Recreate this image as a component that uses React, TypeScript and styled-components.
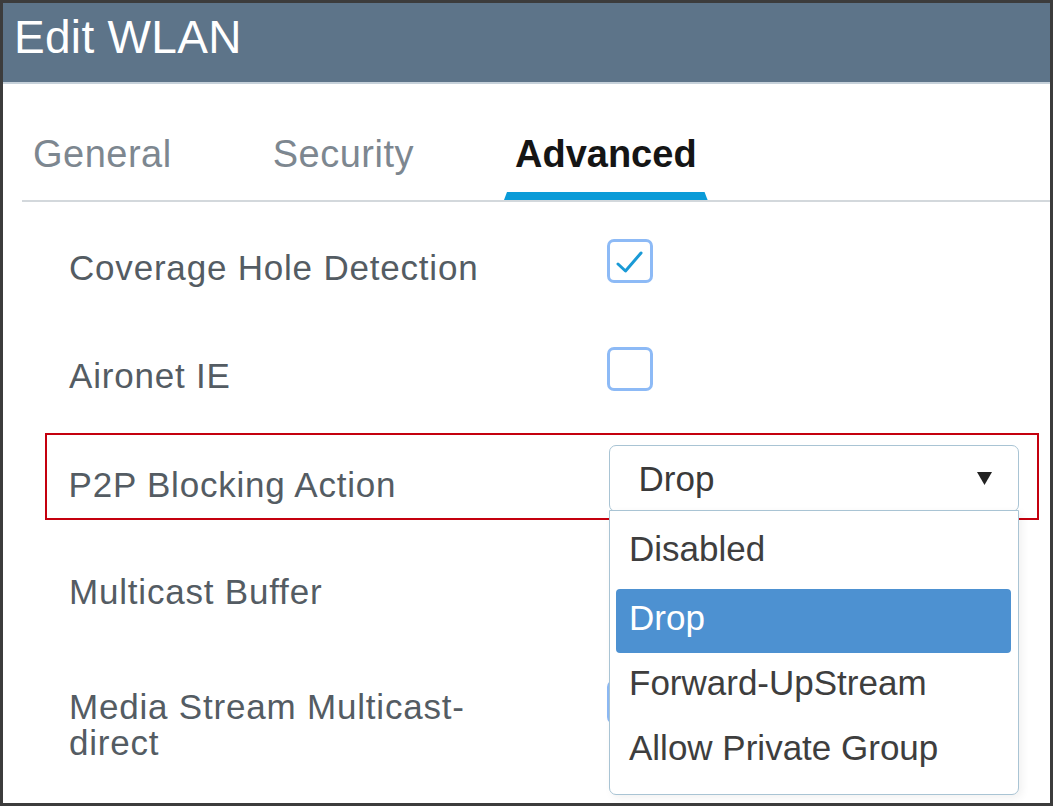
import React from "react";
import styled, { createGlobalStyle, css } from "styled-components";

const Global = createGlobalStyle`
  html, body { margin: 0; padding: 0; background: #ffffff; }
  body { font-family: "Liberation Sans", Arial, sans-serif; }
  * { box-sizing: border-box; }
`;

const Frame = styled.div`
  width: 1053px;
  height: 806px;
  border: 3px solid #3c3c3c;
  overflow: hidden;
  background: #ffffff;
  display: flex;
  flex-direction: column;
`;

const Header = styled.header`
  height: 81px;
  flex: 0 0 81px;
  background: #5d7489;
  border-bottom: 2px solid #c6d1da;
  padding: 11px 0 0 11px;
`;

const Title = styled.h1`
  margin: 0;
  font-size: 46px;
  line-height: 46px;
  font-weight: 400;
  color: #ffffff;
  letter-spacing: 0.3px;
`;

const TabBar = styled.nav`
  margin-left: 19px;
  padding-top: 51px;
  display: flex;
  gap: 79px;
  border-bottom: 2px solid #d3d8dc;
`;

const Tab = styled.div<{ $active?: boolean }>`
  position: relative;
  padding: 0 11px 27px;
  font-size: 38px;
  line-height: 38px;
  color: #7d8790;
  letter-spacing: 0.5px;
  ${(p) =>
    p.$active &&
    css`
      color: #151515;
      font-weight: 700;
      letter-spacing: 0;
      &::after {
        content: "";
        position: absolute;
        left: 0;
        right: 0;
        bottom: 0;
        height: 8px;
        background: #0a9bd8;
        clip-path: polygon(1.5% 0, 98.5% 0, 100% 100%, 0 100%);
      }
    `}
`;

const Form = styled.div`
  padding: 5px 11px 0 42px;
  display: flex;
  flex-direction: column;
`;

const Row = styled.div<{ $highlight?: boolean; $top?: boolean }>`
  display: flex;
  align-items: ${(p) => (p.$top ? "flex-start" : "center")};
  height: 108px;
  border: 2px solid transparent;
  padding-left: 22px;
  ${(p) =>
    p.$highlight &&
    css`
      height: 87px;
      margin: 10px 0 11px;
      padding-top: 4px;
      border: 2.5px solid #c4000e;
      padding-left: 21.5px;
      position: relative;
      z-index: 2;
    `}
`;

const Label = styled.div<{ $pad?: number }>`
  flex: 0 0 538px;
  padding-top: ${(p) => p.$pad ?? 13}px;
  font-size: 35px;
  line-height: 36px;
  color: #545c63;
  letter-spacing: 0.8px;
`;

const Box = styled.div<{ $offset?: number }>`
  width: 46px;
  height: 44px;
  margin-top: ${(p) => p.$offset ?? 0}px;
  border: 3px solid #8dbaf6;
  border-radius: 7px;
  background: #ffffff;
  display: flex;
  align-items: center;
  justify-content: center;
`;

const SelectWrap = styled.div`
  position: relative;
  margin-left: 2px;
  width: 410px;
`;

const Select = styled.div`
  height: 67px;
  border: 1.5px solid #a9c4d4;
  border-radius: 7px;
  background: #ffffff;
  display: flex;
  align-items: center;
  justify-content: space-between;
  padding: 0 26px 0 29px;
  font-size: 35px;
  color: #3a3a3a;
`;

const Menu = styled.ul`
  position: absolute;
  top: calc(100% - 2px);
  left: 0;
  width: 100%;
  margin: 0;
  list-style: none;
  height: 285px;
  padding: 8.5px 6.5px 10.5px;
  border: 1.5px solid #a9c4d4;
  border-radius: 0 0 7px 7px;
  background: #ffffff;
  box-shadow: 3px 3px 8px rgba(0, 0, 0, 0.06);
  display: flex;
  flex-direction: column;
  gap: 1px;
`;

const Item = styled.li<{ $selected?: boolean }>`
  height: 64px;
  flex: 0 0 64px;
  line-height: 58px;
  padding: 0 0 6px 13px;
  font-size: 35px;
  border-radius: 4px;
  color: ${(p) => (p.$selected ? "#ffffff" : "#3e3e3e")};
  background: ${(p) => (p.$selected ? "#4d91d1" : "transparent")};
  &:first-child {
    margin-bottom: 4px;
  }
`;

const Check = () => (
  <svg width="40" height="38" viewBox="0 0 40 38" style={{ display: "block" }}>
    <polyline
      points="8,22 15.5,29 31,11"
      fill="none"
      stroke="#1a9ad6"
      strokeWidth="3"
      strokeLinecap="round"
      strokeLinejoin="round"
    />
  </svg>
);

const Caret = () => (
  <svg width="15" height="13" viewBox="0 0 15 13">
    <polygon points="0,0 15,0 7.5,13" fill="#222222" />
  </svg>
);

export default function App() {
  return (
    <>
      <Global />
      <Frame>
        <Header>
          <Title>Edit WLAN</Title>
        </Header>
        <TabBar>
          <Tab>General</Tab>
          <Tab>Security</Tab>
          <Tab $active>Advanced</Tab>
        </TabBar>
        <Form>
          <Row>
            <Label>Coverage Hole Detection</Label>
            <Box>
              <Check />
            </Box>
          </Row>
          <Row>
            <Label>Aironet IE</Label>
            <Box />
          </Row>
          <Row $highlight>
            <Label>P2P Blocking Action</Label>
            <SelectWrap>
              <Select>
                <span>Drop</span>
                <Caret />
              </Select>
              <Menu>
                <Item>Disabled</Item>
                <Item $selected>Drop</Item>
                <Item>Forward-UpStream</Item>
                <Item>Allow Private Group</Item>
              </Menu>
            </SelectWrap>
          </Row>
          <Row>
            <Label>Multicast Buffer</Label>
          </Row>
          <Row $top>
            <Label $pad={48}>
              Media Stream Multicast-
              <br />
              direct
            </Label>
            <Box $offset={39} />
          </Row>
        </Form>
      </Frame>
    </>
  );
}
